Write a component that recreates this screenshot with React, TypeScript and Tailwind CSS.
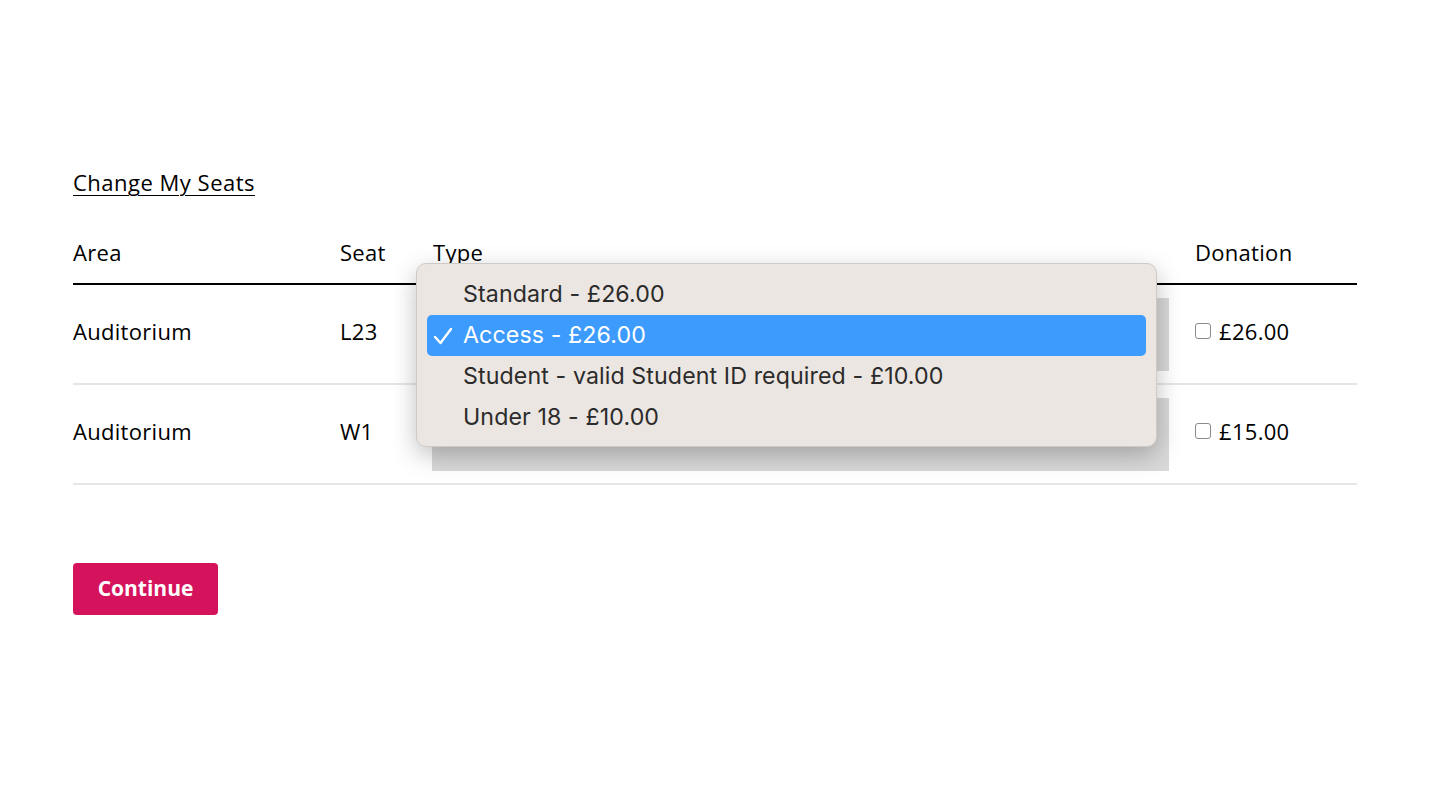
import React from "react";

const rows = [
  { area: "Auditorium", seat: "L23", price: "£26.00" },
  { area: "Auditorium", seat: "W1", price: "£15.00" },
];

const options = [
  "Standard - £26.00",
  "Access - £26.00",
  "Student - valid Student ID required - £10.00",
  "Under 18 - £10.00",
];

export default function App() {
  return (
    <div className="w-[1440px] h-[810px] bg-white text-black" style={{ fontFamily: "'Open Sans', 'Noto Sans', sans-serif" }}>
      <div className="px-[73px] pt-[167px] w-[1430px]">
        <a href="#" className="text-[22px] leading-[30px] underline underline-offset-[4px] decoration-1 tracking-[0.5px]">
          Change My Seats
        </a>
        <div className="relative mt-[22px]">
          <div className="flex items-center h-[66px] border-b-2 border-black text-[22px] tracking-[0.3px] pt-[2px]">
            <div className="w-[267px]">Area</div>
            <div className="w-[93px]">Seat</div>
            <div className="w-[762px]">Type</div>
            <div>Donation</div>
          </div>
          {rows.map((r, i) => (
            <div key={i} className="flex items-center h-[100px] border-b-2 border-[#e6e6e6] text-[22px] tracking-[0.3px]">
              <div className="w-[267px] pb-[6px]">{r.area}</div>
              <div className="w-[92px] pb-[6px]">{r.seat}</div>
              <div className="w-[763px] pr-[26px]">
                <div className="h-[73px] w-[737px] bg-[#d9d9d9]" />
              </div>
              <div className="flex items-center gap-[8px] pb-[6px]">
                <span className="w-[16px] h-[16px] rounded-[3px] border border-[#8a8a8a] bg-white" />
                <span>{r.price}</span>
              </div>
            </div>
          ))}
          <div
            className="absolute left-[343px] top-[44px] w-[741px] h-[184px] rounded-[10px] bg-[#ebe6e2] border border-[#cfcac6] shadow-[0_8px_24px_rgba(0,0,0,0.25)] px-[10px] pt-[10px] text-[23.2px] text-[#2b2b2b]"
            style={{ fontFamily: "Inter, 'Noto Sans', sans-serif" }}
          >
            {options.map((o, i) => (
              <div
                key={i}
                className={
                  "flex items-center h-[41px] rounded-[5px] " +
                  (i === 1 ? "bg-[#3d9bfd] text-white" : "")
                }
              >
                <span className="w-[36px] pl-[6px] flex items-center">
                  {i === 1 ? (
                    <svg width="20" height="18" viewBox="0 0 20 18" fill="none">
                      <path d="M2 10 L7.5 16 L18 2" stroke="white" strokeWidth="2.4" strokeLinecap="round" strokeLinejoin="round" />
                    </svg>
                  ) : null}
                </span>
                <span className="tracking-[0.1px]">{o}</span>
              </div>
            ))}
          </div>
        </div>
        <button className="mt-[78px] w-[145px] h-[52px] rounded-[4px] bg-[#d5135c] text-white text-[21px] font-bold">
          Continue
        </button>
      </div>
    </div>
  );
}
